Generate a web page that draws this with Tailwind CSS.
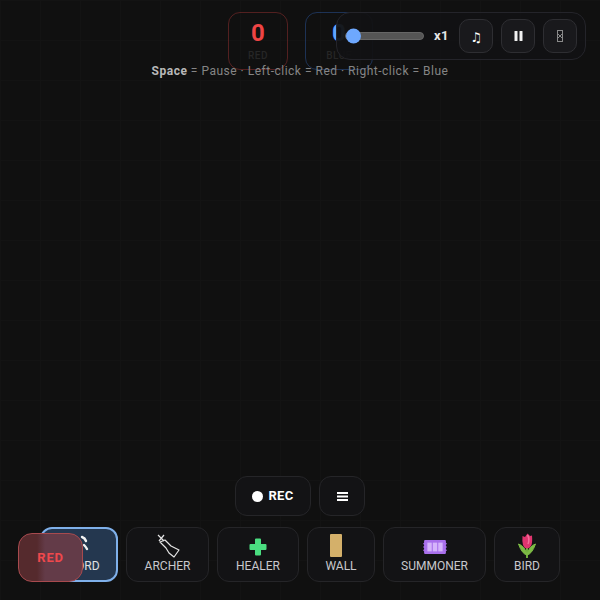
<!DOCTYPE html>
<html lang="en">
<head>
  <meta charset="UTF-8">
  <title>Battle</title>
  <script src="https://cdn.jsdelivr.net/npm/@tailwindcss/browser@4"></script>
</head>
<body class="bg-[#101010] font-['Roboto','Liberation_Sans',sans-serif] overflow-hidden">
<div class="relative w-[600px] h-[600px] flex flex-col items-center overflow-hidden bg-[linear-gradient(#131313_1px,transparent_1px),linear-gradient(90deg,#131313_1px,transparent_1px)] bg-[size:40px_40px]">

  <!-- scores -->
  <div class="flex gap-[17px] mt-3 ml-[1px]">
    <div class="w-[60px] h-[58px] rounded-[12px] border border-[#ef4444]/30 flex flex-col items-center">
      <span class="text-[24px] leading-[40px] font-bold text-[#ef4444]">0</span>
      <span class="text-[10px] leading-3 font-medium tracking-wider text-[#262626] mt-[-3px]">RED</span>
    </div>
    <div class="w-[68px] h-[58px] rounded-[12px] border border-[#3b82f6]/30 flex flex-col items-center">
      <span class="text-[24px] leading-[40px] font-bold text-[#60a5fa]">0</span>
      <span class="text-[10px] leading-3 font-medium tracking-wider text-[#262626] mt-[-3px]">BLUE</span>
    </div>
  </div>

  <!-- hint -->
  <p class="mt-[-7px] text-[12px] leading-4 tracking-[0.5px] text-[#858585] relative">
    <b class="font-bold text-[#b8b8b8]">Space</b> = Pause · Left-click = Red · Right-click = Blue
  </p>

  <!-- record + menu -->
  <div class="mt-auto flex gap-2">
    <button class="h-10 w-[76px] rounded-[12px] border border-[#252528] bg-[#131315] flex items-center justify-center gap-[5px] text-[13px] font-bold tracking-[0.3px] text-white">
      <span class="w-[11px] h-[11px] rounded-full bg-white"></span>REC
    </button>
    <button class="h-10 w-[46px] rounded-[12px] border border-[#252528] bg-[#131315] flex items-center justify-center">
      <svg width="11" height="9" viewBox="0 0 11 9" fill="#fff"><rect y="0" width="11" height="2"/><rect y="3.5" width="11" height="2"/><rect y="7" width="11" height="2"/></svg>
    </button>
  </div>

  <!-- units -->
  <div class="mt-[11px] mb-[18px] flex gap-2 text-[12px] leading-[14px] text-[#c8c8cc]">
    <div class="w-[78px] h-[55px] rounded-[12px] border-2 border-[#7fb0ea] bg-[#24374f] flex flex-col items-center justify-end pb-[7px]">
      <svg class="mb-[1px] ml-[12px]" width="16" height="24" viewBox="0 0 16 24" fill="none" stroke="#f2f2f2" stroke-width="2.4" stroke-linecap="round"><path d="M5 3 Q8 4 9 7"/><path d="M7 11 Q9 13 10 15"/></svg>
      <span class="text-white/85">SWORD</span>
    </div>
    <div class="w-[83px] h-[55px] rounded-[12px] border border-[#252528] bg-[#131315] flex flex-col items-center justify-end pb-[8px]">
      <svg class="mb-[1px]" width="24" height="24" viewBox="0 0 24 24" fill="none" stroke="#e4e4e4" stroke-width="1.2" stroke-linejoin="round"><path d="M2 1 L8 7 M8 1 L3 7"/><path d="M4 8 L9 6 L15 12 L23 16 L18 23 L13 19 L10 14 Z"/></svg>
      <span>ARCHER</span>
    </div>
    <div class="w-[82px] h-[55px] rounded-[12px] border border-[#252528] bg-[#131315] flex flex-col items-center justify-end pb-[8px]">
      <svg class="mb-[3px]" width="18" height="18" viewBox="0 0 18 18" fill="#4ade80"><path d="M6 1.500 Q6 .5 7 .5 H11 Q12 .5 12 1.500 V6 H16.500 Q17.500 6 17.500 7 V11 Q17.500 12 16.500 12 H12 V16.500 Q12 17.500 11 17.500 H7 Q6 17.500 6 16.500 V12 H1.500 Q.5 12 .5 11 V7 Q.5 6 1.500 6 H6 Z"/></svg>
      <span>HEALER</span>
    </div>
    <div class="w-[68px] h-[55px] rounded-[12px] border border-[#252528] bg-[#131315] flex flex-col items-center justify-end pb-[8px]">
      <span class="block w-[12px] h-[23px] bg-[#d4b06a] rounded-[1px] mb-[2px] mr-[11px]"></span>
      <span>WALL</span>
    </div>
    <div class="w-[103px] h-[55px] rounded-[12px] border border-[#252528] bg-[#131315] flex flex-col items-center justify-end pb-[8px]">
      <svg class="mb-[4px]" width="24" height="16" viewBox="0 0 22 14"><path d="M2 0.500 H20 Q21 0.500 21 1.500 V3 L22 4 L21 5 V6 L22 7 L21 8 V9 L22 10 L21 11 V12.500 Q21 13.500 20 13.500 H2 Q1 13.500 1 12.500 V11 L0 10 L1 9 V8 L0 7 L1 6 V5 L0 4 L1 3 V1.500 Q1 0.500 2 0.500 Z" fill="#a970ec"/><rect x="4" y="3" width="4" height="8" fill="#d5b4fb"/><rect x="9" y="3" width="4" height="8" fill="#d5b4fb"/><rect x="14" y="3" width="4" height="8" fill="#d5b4fb"/></svg>
      <span>SUMMONER</span>
    </div>
    <div class="w-[66px] h-[55px] rounded-[12px] border border-[#252528] bg-[#131315] flex flex-col items-center justify-end pb-[8px]">
      <svg class="mb-[1px]" width="18" height="25" viewBox="0 0 18 25"><path d="M9 14 V25" stroke="#6fae3c" stroke-width="2"/><path d="M0.500 11 Q7 13 9 22 Q4 21 0.500 11 Z M17.500 11 Q11 13 9 22 Q14 21 17.500 11 Z" fill="#7dbb45" stroke="#7dbb45"/><path d="M4.500 3 L7 4 L9.500 .5 L12 3 L14 2.500 Q14.500 9 13.500 12 Q11.500 15.500 9 15.500 Q6.500 15.500 5 12 Q4 8 4.500 3 Z" fill="#e0356f"/><path d="M9.500 2 Q12 6 10 11" stroke="#f2709b" stroke-width="1.500" fill="none"/></svg>
      <span>BIRD</span>
    </div>
  </div>

  <!-- floating control panel -->
  <div class="absolute left-[336px] top-3 w-[250px] h-[48px] rounded-[14px] border border-[#24242a] bg-[#121214]/95 flex items-center pl-[8px] pr-2">
    <div class="relative w-[79px] h-[8px] rounded-full bg-[#555] border border-[#666]">
      <span class="absolute left-0 top-1/2 -translate-y-1/2 w-[15px] h-[15px] rounded-full bg-[#6ea8fe]"></span>
    </div>
    <span class="ml-[10px] text-[13px] font-bold text-white/90 tracking-wide">x1</span>
    <div class="ml-auto flex gap-2">
      <button class="w-[34px] h-[34px] rounded-[10px] border border-[#2e2e32] bg-[#19191c] flex items-center justify-center pt-[3px] text-[13px] text-white font-['Noto_Sans','DejaVu_Sans',sans-serif]">♫</button>
      <button class="w-[34px] h-[34px] rounded-[10px] border border-[#2e2e32] bg-[#19191c] flex items-center justify-center">
        <svg width="9" height="10" viewBox="0 0 9 10" fill="#f0f0f0"><rect x="0.500" width="3" height="10" rx=".5"/><rect x="5.500" width="3" height="10" rx=".5"/></svg>
      </button>
      <button class="w-[34px] h-[34px] rounded-[10px] border border-[#2e2e32] bg-[#19191c] flex items-center justify-center">
        <svg width="6" height="12" viewBox="0 0 6 12" fill="none" stroke="#8a8a8a"><rect x=".5" y=".5" width="5" height="11"/><path d="M1 4 L5 8 M5 4 L1 8"/></svg>
      </button>
    </div>
  </div>

  <!-- dragged team chip: opaque two-tone fill stands in for the blurred backdrop -->
  <div class="absolute left-[18px] top-[533px] w-[65px] h-[49px] rounded-[14px] border border-[#a84a4e] bg-[linear-gradient(90deg,#552a2d_18px,#633b48_26px)] flex items-center justify-center text-[13px] font-bold tracking-[0.8px] text-[#f0484c]">RED</div>
</div>
</body>
</html>
